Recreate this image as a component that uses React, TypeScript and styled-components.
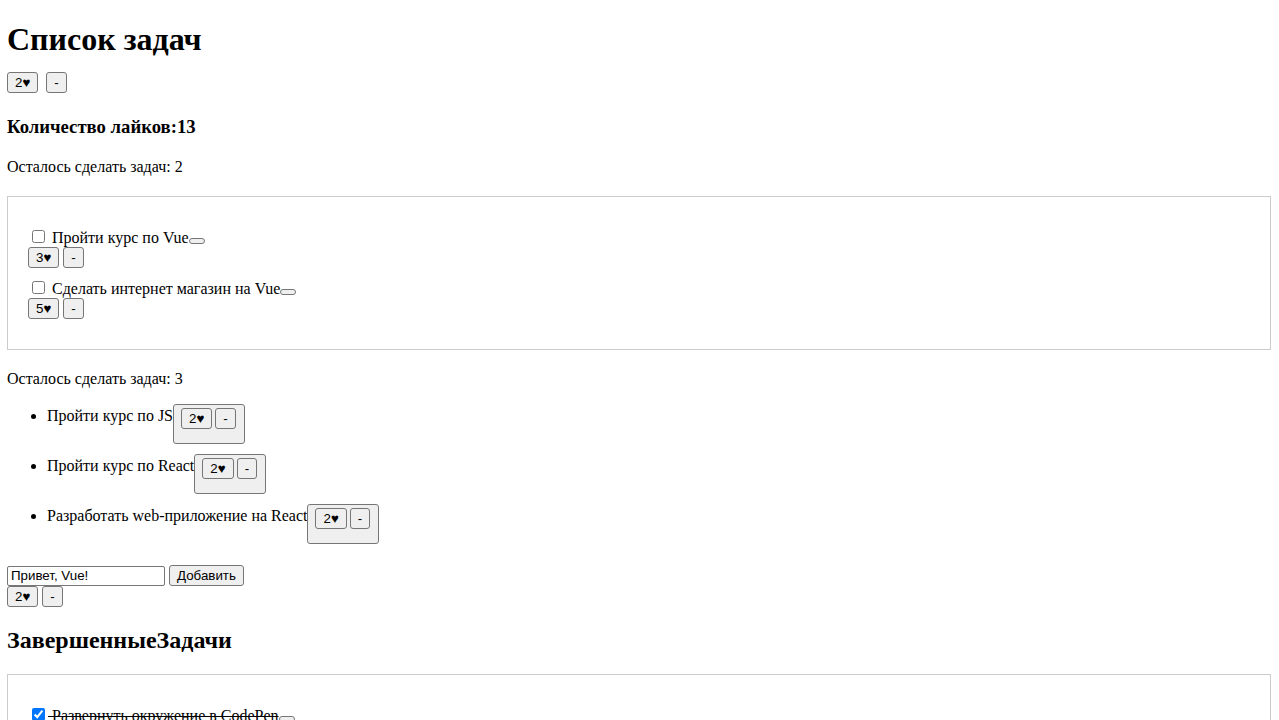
import React from "react";
import styled, { createGlobalStyle } from "styled-components";

const GlobalStyle = createGlobalStyle`
  body {
    margin: 8px 8px 8px 7px;
    font-family: "Liberation Serif", "Times New Roman", serif;
    font-size: 16px;
    color: #000;
    background: #fff;
  }
`;

const Title = styled.h1`
  font-size: 32px;
  font-weight: bold;
  margin: 13.44px 0 13.44px;
`;

const SubTitle = styled.h3`
  font-size: 18.72px;
  font-weight: bold;
  margin: 22.72px 0 20.72px;
`;

const SectionTitle = styled.h2`
  font-size: 24px;
  font-weight: bold;
  margin: 19.92px 0;
`;

const Note = styled.p<{ $mt?: number; $mb?: number }>`
  margin: ${(p) => p.$mt ?? 16}px 0 ${(p) => p.$mb ?? 16}px;
`;

const Btn = styled.button<{ $ml?: number }>`
  font-family: "Liberation Sans", Arial, sans-serif;
  font-size: 13.333px;
  color: #000;
  background-color: #efefef;
  border: 1px solid #767676;
  border-radius: 3px;
  padding: 2px 7px;
  margin: 0 0 0 ${(p) => p.$ml ?? 0}px;
`;

const TinyBtn = styled.button`
  box-sizing: border-box;
  background-color: #efefef;
  border: 1px solid #767676;
  border-radius: 3px;
  padding: 0;
  margin: 0;
  width: 16px;
  height: 6px;
  vertical-align: baseline;
`;

const LikeRow = styled.div``;

const Box = styled.div`
  border: 1px solid #ccc;
  padding: 20px;
`;

const TodoList = styled.ul`
  list-style: none;
  margin: 0;
  padding: 0;
`;

const TodoItem = styled.li`
  margin: 10px 0;
`;

const Check = styled.input`
  margin: 3px 3px 3px 4px;
`;

const Done = styled.span`
  text-decoration: line-through;
`;

const PlainList = styled.ul`
  margin: 12px 0 15px;
  padding-left: 40px;
`;

const PlainItem = styled.li`
  padding: 4px 0 6px;
`;

const LikeWrap = styled.div`
  display: inline-block;
  box-sizing: border-box;
  height: 40px;
  padding: 3px 8px 0 7px;
  background-color: #efefef;
  border: 1px solid #767676;
  border-radius: 3px;
  vertical-align: -2px;
`;

const TextField = styled.input`
  box-sizing: border-box;
  width: 158px;
  height: 20px;
  font-family: "Liberation Sans", Arial, sans-serif;
  font-size: 13.333px;
  color: #000;
  background: #fff;
  border: 1px solid #767676;
  border-radius: 2px;
  padding: 1px 3px;
  margin: 0;
`;

const Form = styled.div``;

type Likes = { n: number; gap: number };

function LikeButtons({ n, gap }: Likes) {
  return (
    <>
      <Btn>{n}♥</Btn>
      <Btn $ml={gap}>-</Btn>
    </>
  );
}

const vueTodos = [
  { title: "Пройти курс по Vue", likes: 3 },
  { title: "Сделать интернет магазин на Vue", likes: 5 },
];

const otherTodos = [
  "Пройти курс по JS",
  "Пройти курс по React",
  "Разработать web-приложение на React",
];

export default function App() {
  return (
    <>
      <GlobalStyle />
      <Title>Список задач</Title>
      <LikeRow>
        <LikeButtons n={2} gap={8} />
      </LikeRow>
      <SubTitle>Количество лайков:13</SubTitle>
      <Note $mb={20}>Осталось сделать задач: 2</Note>
      <Box>
        <TodoList>
          {vueTodos.map((t) => (
            <TodoItem key={t.title}>
              <div>
                <Check type="checkbox" /> {t.title}
                <TinyBtn />
              </div>
              <LikeRow>
                <LikeButtons n={t.likes} gap={4} />
              </LikeRow>
            </TodoItem>
          ))}
        </TodoList>
      </Box>
      <Note $mt={20} $mb={12}>Осталось сделать задач: 3</Note>
      <PlainList>
        {otherTodos.map((t) => (
          <PlainItem key={t}>
            {t}
            <LikeWrap>
              <LikeButtons n={2} gap={3} />
            </LikeWrap>
          </PlainItem>
        ))}
      </PlainList>
      <Form>
        <TextField type="text" defaultValue="Привет, Vue!" />
        <Btn $ml={4}>Добавить</Btn>
      </Form>
      <LikeRow>
        <LikeButtons n={2} gap={4} />
      </LikeRow>
      <SectionTitle>ЗавершенныеЗадачи</SectionTitle>
      <Box>
        <TodoList>
          <TodoItem>
            <div>
              <Check type="checkbox" defaultChecked />
              <Done> Развернуть окружение в CodePen</Done>
              <TinyBtn />
            </div>
            <LikeRow>
              <LikeButtons n={1} gap={4} />
            </LikeRow>
          </TodoItem>
        </TodoList>
      </Box>
    </>
  );
}
